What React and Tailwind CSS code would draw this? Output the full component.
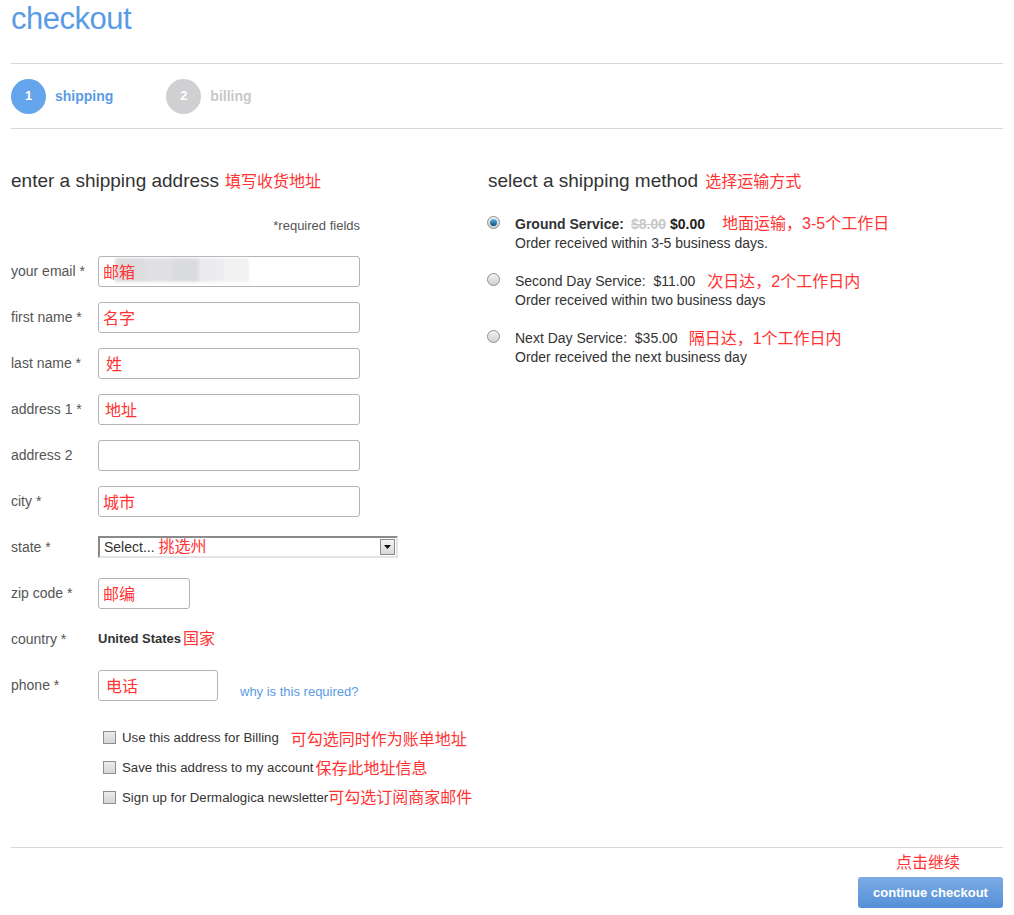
import React from "react";

const F = { fontFamily: '"Liberation Sans", Arial, "Noto Sans CJK SC", sans-serif' };

function Red({ children, className = "" }) {
  return <span className={"text-[#ff3333] text-[16px] " + className}>{children}</span>;
}

function Field({ label, width = "w-[262px]", children }) {
  return (
    <div className="flex h-[46px] items-center">
      <div className="w-[87px] text-[14px] text-[#555]">{label}</div>
      <div className={"flex h-[31px] items-end rounded-[3px] border border-[#b3b3b8] bg-white px-[4px] pb-[1px] " + width}>
        {children}
      </div>
    </div>
  );
}

function Radio({ checked }) {
  return (
    <div className="mt-[1px] flex h-[13px] w-[13px] shrink-0 items-center justify-center rounded-full border border-[#8e8e8e] bg-gradient-to-b from-[#f2f2f2] to-[#d0d0d0]">
      {checked && <div className="h-[7px] w-[7px] rounded-full bg-gradient-to-b from-[#5fb6e8] to-[#0b4f7d]" />}
    </div>
  );
}

function Check() {
  return <div className="h-[13px] w-[13px] shrink-0 border border-[#8e8e8e] bg-gradient-to-b from-[#ececec] to-[#d6d6d6]" />;
}

export default function App() {
  return (
    <div style={F} className="min-h-[915px] w-[1014px] bg-white px-[11px] text-[#333]">
      <h1 className="h-[63px] pt-[1px] text-[31px] leading-[36px] tracking-[-0.5px] text-[#5b9be6]">checkout</h1>
      <div className="border-t border-[#d9d9d9]" />
      <div className="flex h-[64px] items-center">
        <div className="flex items-center">
          <div className="flex h-[35px] w-[35px] items-center justify-center rounded-full bg-[#65a5ec] text-[13px] font-bold text-white">1</div>
          <span className="ml-[9px] text-[14px] font-bold text-[#5b9be6]">shipping</span>
        </div>
        <div className="ml-[53px] flex items-center">
          <div className="flex h-[35px] w-[35px] items-center justify-center rounded-full bg-[#d0d0d2] text-[13px] font-bold text-white">2</div>
          <span className="ml-[9px] text-[14px] font-bold text-[#c8c8ca]">billing</span>
        </div>
      </div>
      <div className="border-t border-[#d9d9d9]" />

      <div className="flex">
        <div className="w-[477px]">
          <div className="mt-[38px] flex items-baseline">
            <span className="text-[19px] text-[#333]">enter a shipping address</span>
            <Red className="ml-[6px]">填写收货地址</Red>
          </div>
          <div className="mt-[20px] w-[349px] text-right text-[13px] text-[#555]">*required fields</div>
          <div className="mt-[13px]">
            <Field label="your email *">
              <div className="relative flex h-full w-full items-end">
                <div className="absolute left-[12px] top-[1px] flex h-[24px] blur-[1.5px]">
                  <div className="h-full w-[30px] bg-[#dcdcdf]" />
                  <div className="h-full w-[28px] bg-[#e0e0e3]" />
                  <div className="h-full w-[26px] bg-[#dadbde]" />
                  <div className="h-full w-[25px] bg-[#ececee]" />
                  <div className="h-full w-[25px] bg-[#f2f2f3]" />
                </div>
                <Red className="relative">邮箱</Red>
              </div>
            </Field>
            <Field label="first name *"><Red>名字</Red></Field>
            <Field label="last name *"><Red className="ml-[3px]">姓</Red></Field>
            <Field label="address 1 *"><Red className="ml-[2px]">地址</Red></Field>
            <Field label="address 2" />
            <Field label="city *"><Red>城市</Red></Field>
            <div className="flex h-[46px] items-center">
              <div className="w-[87px] text-[14px] text-[#555]">state *</div>
              <div className="flex h-[22px] w-[300px] items-center border-2 border-t-[#8a8a8a] border-l-[#8a8a8a] border-b-[#e4e4e4] border-r-[#e4e4e4] bg-white pl-[4px]">
                <span className="text-[14px] text-[#333]">Select...</span>
                <Red className="ml-[4px]">挑选州</Red>
                <div className="ml-auto mr-[1px] flex h-[16px] w-[15px] items-center justify-center border border-[#8a8a8a] bg-gradient-to-b from-[#f4f4f4] to-[#d8d8d8]">
                  <svg width="7" height="4" viewBox="0 0 7 4"><path d="M0 0h7L3.5 4z" fill="#111" /></svg>
                </div>
              </div>
            </div>
            <Field label="zip code *" width="w-[92px]"><Red>邮编</Red></Field>
            <div className="flex h-[46px] items-center">
              <div className="w-[87px] text-[14px] text-[#555]">country *</div>
              <span className="text-[13px] font-bold text-[#333]">United States</span>
              <Red className="ml-[2px]">国家</Red>
            </div>
            <div className="flex h-[46px] items-center">
              <div className="w-[87px] text-[14px] text-[#555]">phone *</div>
              <div className="flex h-[31px] w-[120px] items-end rounded-[3px] border border-[#b3b3b8] bg-white px-[4px] pb-[1px]">
                <Red className="ml-[3px]">电话</Red>
              </div>
              <span className="ml-[22px] mt-[14px] text-[13px] text-[#5b9be6]">why is this required?</span>
            </div>
          </div>
          <div className="ml-[92px] mt-[20px] flex flex-col gap-[11px]">
            <div className="flex h-[19px] items-center">
              <Check />
              <span className="ml-[6px] text-[13.25px] text-[#333]">Use this address for Billing</span>
              <Red className="ml-[12px] mt-[4px]">可勾选同时作为账单地址</Red>
            </div>
            <div className="flex h-[19px] items-center">
              <Check />
              <span className="ml-[6px] text-[13.25px] text-[#333]">Save this address to my account</span>
              <Red className="ml-[2px] mt-[2px]">保存此地址信息</Red>
            </div>
            <div className="flex h-[19px] items-center">
              <Check />
              <span className="ml-[6px] text-[13.25px] text-[#333]">Sign up for Dermalogica newsletter</span>
              <Red className="mt-[1px]">可勾选订阅商家邮件</Red>
            </div>
          </div>
        </div>

        <div className="flex-1">
          <div className="mt-[38px] flex items-baseline">
            <span className="text-[19px] text-[#333]">select a shipping method</span>
            <Red className="ml-[7px]">选择运输方式</Red>
          </div>
          <div className="ml-[-1px] mt-[19px] flex flex-col gap-[19px]">
            <div className="flex">
              <Radio checked />
              <div className="ml-[15px] text-[14px] leading-[19px]">
                <div className="flex items-center">
                  <span className="font-bold">Ground Service:</span>
                  <span className="ml-[7px] font-bold text-[#c8c8c8] line-through">$8.00</span>
                  <span className="ml-[4px] font-bold text-[#222]">$0.00</span>
                  <Red className="ml-[17px] -mt-[2px]">地面运输，3-5个工作日</Red>
                </div>
                <div>Order received within 3-5 business days.</div>
              </div>
            </div>
            <div className="flex">
              <Radio />
              <div className="ml-[15px] text-[14px] leading-[19px]">
                <div className="flex items-center">
                  <span>Second Day Service:&nbsp; $11.00</span>
                  <Red className="ml-[12px]">次日达，2个工作日内</Red>
                </div>
                <div>Order received within two business days</div>
              </div>
            </div>
            <div className="flex">
              <Radio />
              <div className="ml-[15px] text-[14px] leading-[19px]">
                <div className="flex items-center">
                  <span>Next Day Service:&nbsp; $35.00</span>
                  <Red className="ml-[11px]">隔日达，1个工作日内</Red>
                </div>
                <div>Order received the next business day</div>
              </div>
            </div>
          </div>
        </div>
      </div>

      <div className="mt-[40px] border-t border-[#d9d9d9]" />
      <div className="flex flex-col items-end">
        <Red className="mr-[43px] mt-[4px] leading-[22px]">点击继续</Red>
        <button className="mt-[3px] h-[31px] w-[145px] rounded-[3px] bg-gradient-to-b from-[#7cabe2] to-[#5390d9] text-[13px] font-bold text-white" style={F}>
          continue checkout
        </button>
      </div>
    </div>
  );
}
